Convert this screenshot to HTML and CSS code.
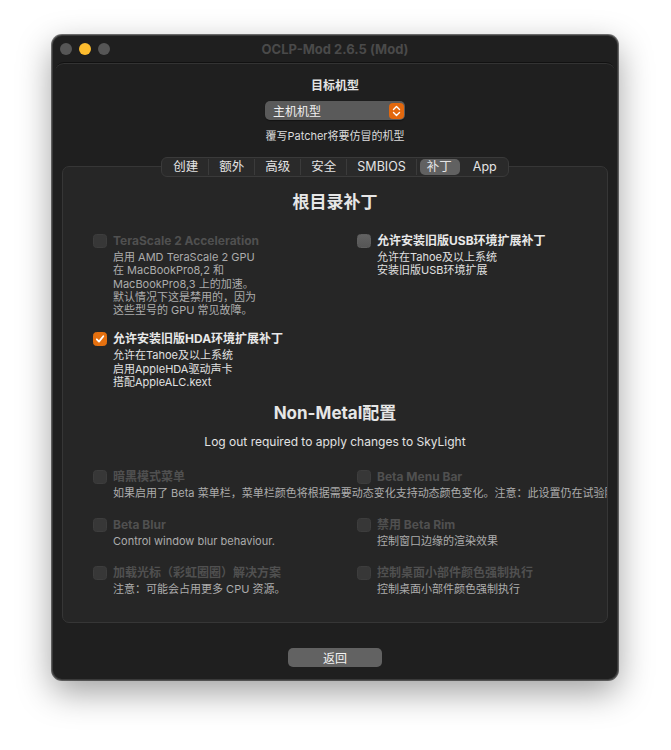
FILE: index.html
```html
<!DOCTYPE html>
<html lang="zh-CN">

<head>
  <meta charset="UTF-8" />
  <meta name="viewport" content="width=device-width, initial-scale=1.0" />
  <title>OCLP-Mod 2.6.5 (Mod)</title>
  <link rel="stylesheet" href="styles.css">
</head>

<body>
  <div class="window">
    <div class="titlebar">
      <div class="lights">
        <span class="light"></span>
        <span class="light yellow"></span>
        <span class="light"></span>
      </div>
      <div class="wtitle">OCLP-Mod 2.6.5 (Mod)</div>
    </div>

    <div class="sheet">
      <div class="label-bold">目标机型</div>
      <div class="popup">
        <span>主机机型</span>
        <span class="stepper">
          <svg width="9" height="12" viewBox="0 0 9 12">
            <path d="M1.5 4.5 L4.5 1.5 L7.5 4.5 M1.5 7.5 L4.5 10.5 L7.5 7.5" fill="none" stroke="#fff" stroke-width="1.4" stroke-linecap="round" stroke-linejoin="round" />
          </svg>
        </span>
      </div>
      <div class="hint">覆写Patcher将要仿冒的机型</div>

      <div class="tabs">
        <span class="tab">创建</span>
        <span class="tab">额外</span>
        <span class="tab">高级</span>
        <span class="tab">安全</span>
        <span class="tab">SMBIOS</span>
        <span class="tab active">补丁</span>
        <span class="tab last">App</span>
      </div>

      <div class="panel">
        <h2>根目录补丁</h2>
        <div class="grid root">
          <div class="item off">
            <div class="row"><span class="box"></span><span class="name">TeraScale 2 Acceleration</span></div>
            <div class="desc">启用 AMD TeraScale 2 GPU<br>在 MacBookPro8,2 和<br>MacBookPro8,3 上的加速。<br>默认情况下这是禁用的，因为<br>这些型号的 GPU 常见故障。</div>
          </div>
          <div class="item">
            <div class="row"><span class="box on"></span><span class="name">允许安装旧版USB环境扩展补丁</span></div>
            <div class="desc">允许在Tahoe及以上系统<br>安装旧版USB环境扩展</div>
          </div>
          <div class="item">
            <div class="row">
              <span class="box checked">
                <svg width="10" height="10" viewBox="0 0 10 10">
                  <path d="M1.8 5.3 L4 7.6 L8.3 2.2" fill="none" stroke="#fff" stroke-width="1.8" stroke-linecap="round" stroke-linejoin="round" />
                </svg>
              </span>
              <span class="name">允许安装旧版HDA环境扩展补丁</span>
            </div>
            <div class="desc">允许在Tahoe及以上系统<br>启用AppleHDA驱动声卡<br>搭配AppleALC.kext</div>
          </div>
        </div>

        <h2 class="second">Non-Metal配置</h2>
        <div class="note">Log out required to apply changes to SkyLight</div>

        <div class="grid metal">
          <div class="item off">
            <div class="row"><span class="box"></span><span class="name">暗黑模式菜单</span></div>
            <div class="desc nowrap">如果启用了 Beta 菜单栏，菜单栏颜色将根据需要动态变化支持动态颜色变化。注意：此设置仍在试验阶段。如</div>
          </div>
          <div class="item off">
            <div class="row"><span class="box"></span><span class="name">Beta Menu Bar</span></div>
          </div>
          <div class="item off">
            <div class="row"><span class="box"></span><span class="name">Beta Blur</span></div>
            <div class="desc">Control window blur behaviour.</div>
          </div>
          <div class="item off">
            <div class="row"><span class="box"></span><span class="name">禁用 Beta Rim</span></div>
            <div class="desc">控制窗口边缘的渲染效果</div>
          </div>
          <div class="item off">
            <div class="row"><span class="box"></span><span class="name">加载光标（彩虹圈圈）解决方案</span></div>
            <div class="desc">注意：可能会占用更多 CPU 资源。</div>
          </div>
          <div class="item off">
            <div class="row"><span class="box"></span><span class="name">控制桌面小部件颜色强制执行</span></div>
            <div class="desc">控制桌面小部件颜色强制执行</div>
          </div>
        </div>
      </div>

      <div class="footer">
        <button class="back">返回</button>
      </div>
    </div>
  </div>
</body>

</html>
```

FILE: styles.css
```css
html {
  background: #fff;
}

body {
  margin: 0;
  padding: 35px 0 0 52px;
  min-height: 750px;
  box-sizing: border-box;
  font-family: Inter, "Noto Sans CJK SC", sans-serif;
  color: #e2e2e2;
}

.window {
  width: 566px;
  height: 645px;
  background: #1f1f1f;
  border-radius: 10px;
  box-shadow: 0 0 0 1px rgba(0, 0, 0, 0.55), inset 0 0 0 1px rgba(255, 255, 255, 0.12), 0 12px 34px rgba(0, 0, 0, 0.38);
  overflow: hidden;
  display: flex;
  flex-direction: column;
}

.titlebar {
  height: 27px;
  display: flex;
  align-items: center;
}

.lights {
  display: flex;
  gap: 7px;
  margin-left: 8px;
  margin-top: 1px;
}

.light {
  width: 12px;
  height: 12px;
  border-radius: 50%;
  background: #565656;
}

.light.yellow {
  background: #fdbc2e;
}

.wtitle {
  flex: 1;
  text-align: center;
  margin-right: 58px;
  margin-top: 1px;
  font-size: 13px;
  font-weight: 700;
  color: #4a4a4a;
}

.sheet {
  flex: 1;
  margin: 0 3px;
  border-radius: 9px 9px 0 0;
  border-top: 1px solid #111;
  box-shadow: inset 0 1px 0 rgba(255, 255, 255, 0.09);
  display: flex;
  flex-direction: column;
  align-items: center;
  padding-top: 15px;
}

.label-bold {
  font-size: 12px;
  font-weight: 700;
  line-height: 16px;
  color: #e4e4e4;
}

.popup {
  margin-top: 7px;
  width: 140px;
  height: 19px;
  box-sizing: border-box;
  background: #5a5a5a;
  border-radius: 5px;
  display: flex;
  align-items: center;
  justify-content: space-between;
  padding: 0 1px 0 8px;
  font-size: 12px;
  color: #f0f0f0;
  box-shadow: 0 0.5px 1px rgba(0, 0, 0, 0.4);
}

.stepper {
  width: 15px;
  height: 16px;
  background: #e2680e;
  border-radius: 4px;
  display: flex;
  align-items: center;
  justify-content: center;
}

.hint {
  margin-top: 9px;
  font-size: 11px;
  line-height: 14px;
  color: #dcdcdc;
}

.tabs {
  margin-top: 14px;
  height: 20px;
  box-sizing: border-box;
  display: flex;
  align-items: center;
  background: #2a2a2a;
  border: 1px solid #3a3a3a;
  border-radius: 6px;
  padding: 0 1px;
  position: relative;
  z-index: 1;
}

.tab {
  font-size: 12.5px;
  line-height: 16px;
  padding: 0 10px;
  color: #e4e4e4;
  border-right: 1px solid #3b3b3b;
}

.tab.last {
  border-right: none;
}

.tab.active {
  background: #616161;
  border-radius: 5px;
  border-right-color: transparent;
  margin: 0 3px;
  padding: 0 7px;
}

.panel {
  margin-top: -11px;
  width: 546px;
  height: 457px;
  box-sizing: border-box;
  background: #262626;
  border: 1px solid #363636;
  border-radius: 7px;
  padding: 24px 0 0 30px;
  overflow: hidden;
}

h2 {
  margin: 0 30px 0 0;
  text-align: center;
  font-size: 17px;
  line-height: 22px;
  font-weight: 700;
  color: #e6e6e6;
}

h2.second {
  margin-top: 13px;
}

.note {
  margin: 10px 30px 0 0;
  text-align: center;
  font-size: 12px;
  line-height: 16px;
  color: #e2e2e2;
}

.grid {
  display: grid;
  grid-template-columns: 264px 1fr;
}

.grid.root {
  margin-top: 20px;
  row-gap: 14px;
}

.grid.metal {
  margin-top: 19px;
  row-gap: 16.5px;
}

.row {
  display: flex;
  align-items: center;
  gap: 6px;
}

.box {
  width: 14px;
  height: 14px;
  box-sizing: border-box;
  border-radius: 3.5px;
  background: #373737;
  border: 1px solid #3d3d3d;
  display: flex;
  align-items: center;
  justify-content: center;
}

.box.on {
  background: linear-gradient(#626262, #565656);
  border-color: #5e5e5e;
}

.box.checked {
  background: #e5700f;
  border-color: #e5700f;
}

.name {
  font-size: 12px;
  line-height: 16px;
  font-weight: 700;
  color: #e8e8e8;
}

.off .name {
  color: #505050;
}

.desc {
  margin: 2px 0 0 20px;
  font-size: 11px;
  line-height: 13.3px;
  color: #e0e0e0;
}

.off .desc {
  color: #acacac;
}

.nowrap {
  white-space: nowrap;
}

.footer {
  margin-top: 24px;
}

.back {
  width: 94px;
  height: 19px;
  border: none;
  border-radius: 5px;
  background: #626262;
  color: #f2f2f2;
  font-family: Inter, "Noto Sans CJK SC", sans-serif;
  font-size: 12px;
  padding: 0;
}
```
